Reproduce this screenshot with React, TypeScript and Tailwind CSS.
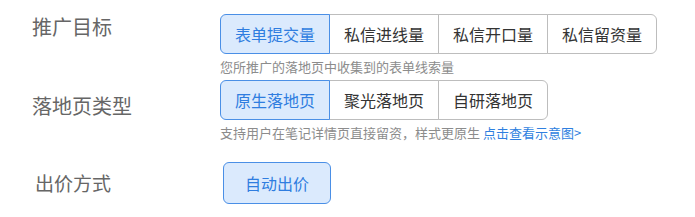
import React from "react";

const font = { fontFamily: '"Noto Sans CJK SC", "Noto Sans", sans-serif' };

function Group({ items, selected }: { items: string[]; selected: number }) {
  return (
    <div className="flex h-[40px]">
      {items.map((t, i) => {
        const sel = i === selected;
        const first = i === 0;
        const last = i === items.length - 1;
        return (
          <div
            key={t}
            className={
              "relative flex items-center justify-center px-[14px] text-[16px] leading-[20px] border " +
              (first ? "rounded-l-[6px] " : "-ml-px ") +
              (last ? "rounded-r-[6px] " : "") +
              (sel
                ? "z-10 border-[#4a8fe6] bg-[#dbeafd] text-[#2f7de0]"
                : "border-[#bdbdbd] bg-white text-[#333333]")
            }
          >
            {t}
          </div>
        );
      })}
    </div>
  );
}

export default function App() {
  return (
    <div className="w-[695px] h-[217px] bg-white pt-[14px]" style={font}>
      <div className="flex">
        <div className="w-[188px] ml-[32px] mt-[3px] text-[20px] leading-[20px] text-[#666666]">推广目标</div>
        <div className="flex flex-col">
          <Group items={["表单提交量", "私信进线量", "私信开口量", "私信留资量"]} selected={0} />
          <div className="mt-[4px] text-[13px] leading-[18px] text-[#8c8c8c]">您所推广的落地页中收集到的表单线索量</div>
        </div>
      </div>
      <div className="flex mt-[4px]">
        <div className="w-[188px] ml-[32px] mt-[16px] text-[20px] leading-[20px] text-[#666666]">落地页类型</div>
        <div className="flex flex-col">
          <Group items={["原生落地页", "聚光落地页", "自研落地页"]} selected={0} />
          <div className="mt-[4px] text-[13px] leading-[18px] text-[#8c8c8c]">
            支持用户在笔记详情页直接留资，样式更原生 <span className="text-[#2f7fe0]">点击查看示意图&gt;</span>
          </div>
        </div>
      </div>
      <div className="flex mt-[20px]">
        <div className="w-[188px] ml-[35px] mt-[11px] text-[19px] leading-[20px] text-[#666666]">出价方式</div>
        <div className="flex">
          <div className="flex h-[42px] items-center rounded-[6px] border border-[#4a8fe6] bg-[#dbeafd] px-[21px] text-[16px] leading-[20px] text-[#2f7de0]">
            自动出价
          </div>
        </div>
      </div>
    </div>
  );
}
